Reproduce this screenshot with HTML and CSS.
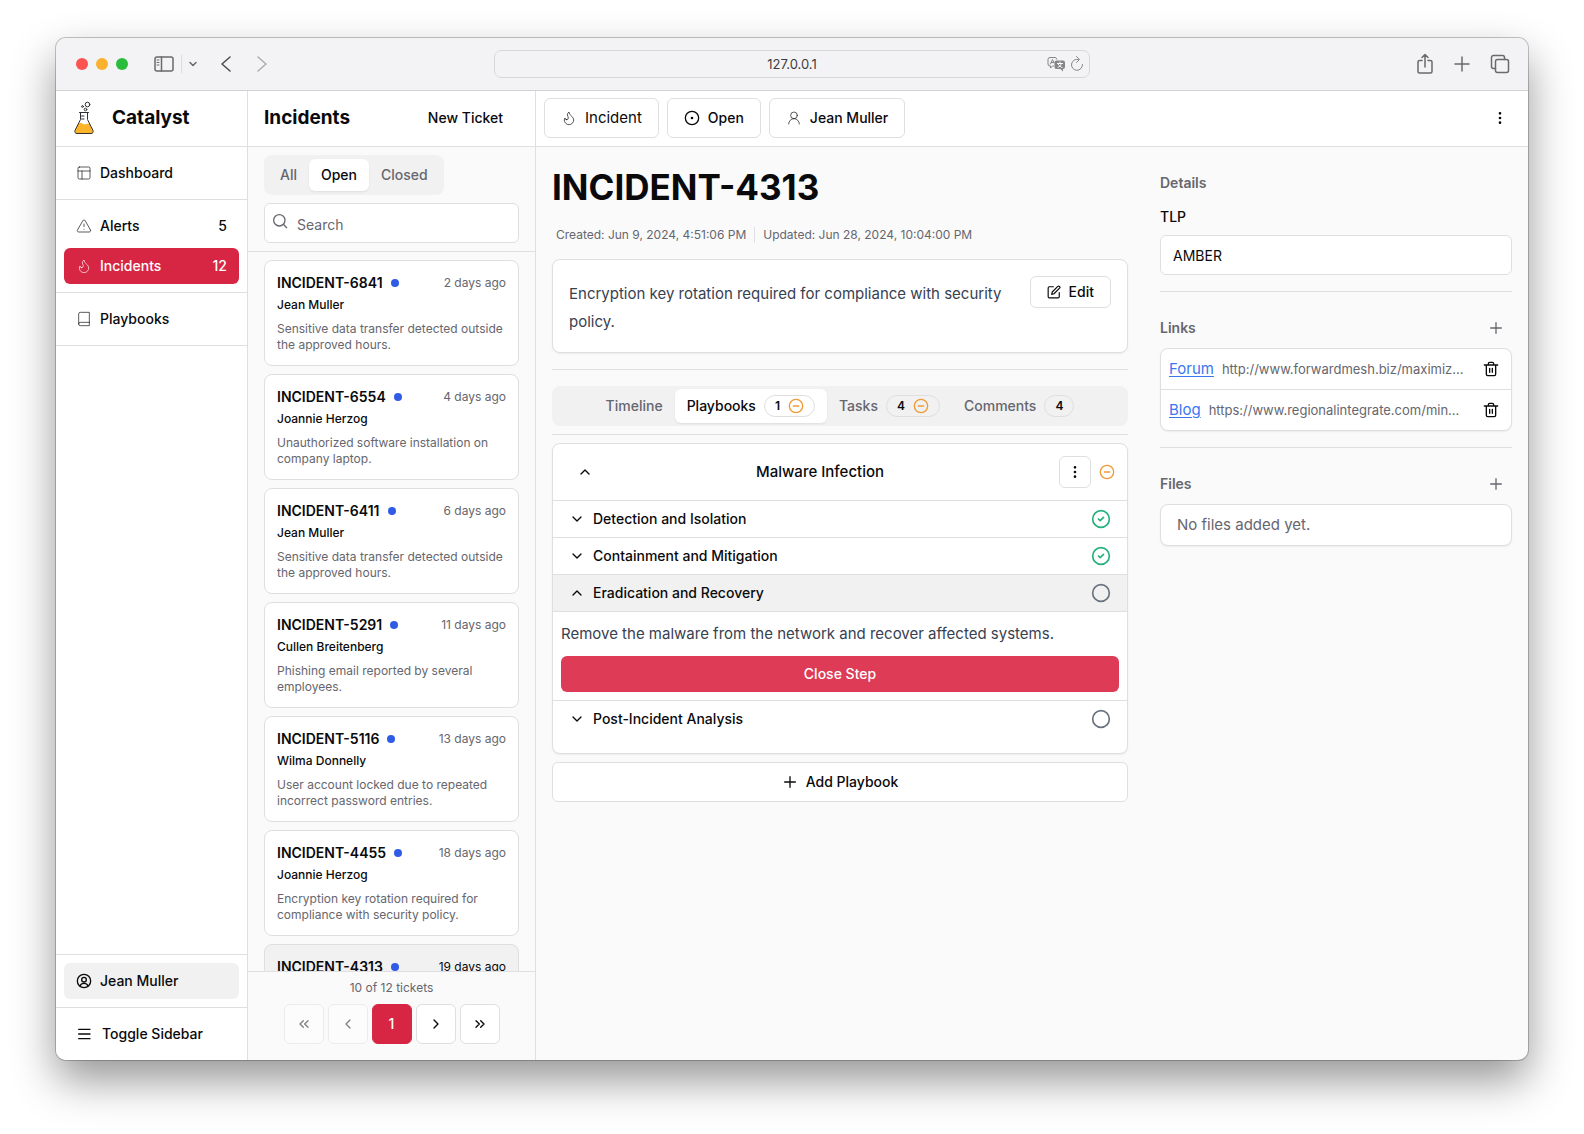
FILE: index.html
```html
<!DOCTYPE html>
<html lang="en">
<head>
<meta charset="utf-8">
<title>Catalyst – Incidents</title>
<link rel="stylesheet" href="styles.css">
</head>
<body>
<svg class="sprite" aria-hidden="true">
  <symbol id="flame" viewBox="0 0 24 24"><path d="M8.5 14.5A2.5 2.5 0 0 0 11 12c0-1.38-.5-2-1-3-1.072-2.143-.224-4.054 2-6 .5 2.5 2 4.9 4 6.5 2 1.6 3 3.5 3 5.5a7 7 0 1 1-14 0c0-1.153.433-2.294 1-3a2.5 2.5 0 0 0 2.5 2.5z"/></symbol>
  <symbol id="panels" viewBox="0 0 24 24"><rect x="3" y="3" width="18" height="18" rx="2"/><path d="M3 9h18M9 21V9"/></symbol>
  <symbol id="alert" viewBox="0 0 24 24"><path d="m21.73 18-8-14a2 2 0 0 0-3.48 0l-8 14A2 2 0 0 0 4 21h16a2 2 0 0 0 1.73-3M12 9v4M12 17h.01"/></symbol>
  <symbol id="book" viewBox="0 0 24 24"><path d="M4 19.5v-15A2.5 2.5 0 0 1 6.5 2H20v20H6.5a2.5 2.5 0 0 1 0-5H20"/></symbol>
  <symbol id="user" viewBox="0 0 24 24"><circle cx="12" cy="8" r="5"/><path d="M20 21a8 8 0 0 0-16 0"/></symbol>
  <symbol id="user-circle" viewBox="0 0 24 24"><circle cx="12" cy="12" r="10"/><circle cx="12" cy="10" r="3.5"/><path d="M6 19.5c1-3 3-4 6-4s5 1 6 4"/></symbol>
  <symbol id="menu" viewBox="0 0 24 24"><path d="M4 5h17M4 12h17M4 19h17"/></symbol>
  <symbol id="search" viewBox="0 0 24 24"><circle cx="11" cy="11" r="8.5"/><path d="m22 22-5-5"/></symbol>
  <symbol id="dot-circle" viewBox="0 0 24 24"><circle cx="12" cy="12" r="10"/><circle cx="12" cy="12" r="1"/></symbol>
  <symbol id="kebab" viewBox="0 0 24 24"><circle cx="12" cy="5" r="1"/><circle cx="12" cy="12" r="1"/><circle cx="12" cy="19" r="1"/></symbol>
  <symbol id="edit" viewBox="0 0 24 24"><path d="M11 3H4a2 2 0 0 0-2 2v15a2 2 0 0 0 2 2h15a2 2 0 0 0 2-2v-7"/><path d="M18.500 2.500a2.100 2.100 0 0 1 3 3L12 15l-4 1 1-4z"/></symbol>
  <symbol id="minus-circle" viewBox="0 0 24 24"><circle cx="12" cy="12" r="10"/><path d="M8 12h8"/></symbol>
  <symbol id="check-circle" viewBox="0 0 24 24"><circle cx="12" cy="12" r="10"/><path d="m9 12 2 2 4-4"/></symbol>
  <symbol id="circle" viewBox="0 0 24 24"><circle cx="12" cy="12" r="10"/></symbol>
  <symbol id="up" viewBox="0 0 24 24"><path d="m18 15-6-6-6 6"/></symbol>
  <symbol id="down" viewBox="0 0 24 24"><path d="m6 9 6 6 6-6"/></symbol>
  <symbol id="left" viewBox="0 0 24 24"><path d="m15 18-6-6 6-6"/></symbol>
  <symbol id="right" viewBox="0 0 24 24"><path d="m9 18 6-6-6-6"/></symbol>
  <symbol id="first" viewBox="0 0 24 24"><path d="m11 17-5-5 5-5M18 17l-5-5 5-5"/></symbol>
  <symbol id="last" viewBox="0 0 24 24"><path d="m6 17 5-5-5-5M13 17l5-5-5-5"/></symbol>
  <symbol id="plus" viewBox="0 0 24 24"><path d="M4 12h16M12 4v16"/></symbol>
  <symbol id="trash" viewBox="0 0 24 24"><path d="M2 6h20M19 6v14a2 2 0 0 1-2 2H7a2 2 0 0 1-2-2V6M8 6V4a2 2 0 0 1 2-2h4a2 2 0 0 1 2 2v2M10 11v6M14 11v6"/></symbol>
</svg>

<div class="window">
  <header class="titlebar">
    <div class="titlebar-left">
      <span class="light light-red"></span><span class="light light-amber"></span><span class="light light-green"></span>
      <button class="chrome-btn sidebar-toggle" aria-label="Show sidebar"><svg width="20" height="16" viewBox="0 0 20 16"><rect x="1" y="1" width="18" height="14" rx="2"/><path d="M7.5 1v14"/><path class="thin" d="M3 4h2M3 6.5h2M3 9h2"/></svg></button>
      <span class="chrome-sep"></span>
      <button class="chrome-btn chrome-caret" aria-label="Tab groups"><svg width="8" height="6" viewBox="0 0 8 6"><path d="m1 1.500 3 3 3-3"/></svg></button>
      <button class="chrome-btn chrome-back" aria-label="Back"><svg width="10" height="16" viewBox="0 0 10 16"><path d="M9 1 1 8l8 7"/></svg></button>
      <button class="chrome-btn chrome-forward" aria-label="Forward" disabled><svg width="10" height="16" viewBox="0 0 10 16"><path d="m1 1 8 7-8 7"/></svg></button>
    </div>
    <div class="address">
      <span></span>
      <span>127.0.0.1</span>
      <span class="address-icons">
        <svg width="18" height="16" viewBox="0 0 18 16"><path d="M6.500 10H5.500L3.500 12v-2H3a2 2 0 0 1-2-2V3.500a2 2 0 0 1 2-2h5a2 2 0 0 1 1.800 1.500M3.500 8 5.500 3.500 7 7M4.300 6.500h2.500"/><path class="solid" d="M9.500 4.500H16a2 2 0 0 1 2 2V11a2 2 0 0 1-2 2v2.500L13.500 13h-4a2 2 0 0 1-2-2V6.500a2 2 0 0 1 2-2z"/><path class="glyph" d="M10.500 7.500h5M13 6v1.500M11 11.500c2-1 3-2.500 3.300-4M11.500 8.500c1 1.500 2 2.500 3.600 3"/></svg>
        <svg width="14" height="16" viewBox="0 0 14 16"><path d="M8.500 3.500A5.500 5.500 0 1 0 12.500 8.500M6.500 .500l3 3-3 3"/></svg>
      </span>
    </div>
    <div class="titlebar-right">
      <button class="chrome-btn" aria-label="Share"><svg width="18" height="22" viewBox="0 0 18 22"><path d="M6 7.5H3.5A1.500 1.500 0 0 0 2 9v9.500A1.500 1.500 0 0 0 3.500 20h11a1.500 1.500 0 0 0 1.500-1.500V9a1.500 1.500 0 0 0-1.500-1.500H12M9 14V1.500M6 4.500l3-3 3 3"/></svg></button>
      <button class="chrome-btn" aria-label="New tab"><svg width="16" height="16" viewBox="0 0 16 16"><path d="M1 8h14M8 1v14"/></svg></button>
      <button class="chrome-btn" aria-label="Tab overview"><svg width="20" height="20" viewBox="0 0 20 20"><rect x="5.500" y="5.500" width="13" height="13" rx="2"/><path d="M5.500 14.500H3.500a2 2 0 0 1-2-2v-9a2 2 0 0 1 2-2h9a2 2 0 0 1 2 2v2"/></svg></button>
    </div>
  </header>

  <div class="app">
    <nav class="sidebar">
      <div class="brand">
        <svg class="flask" viewBox="0 0 22 34"><path class="liquid" d="M5 23c2-1.800 4-.8 6 .3 2 .6 3-1.300 5.500-.8L20 29.500c.6 1.500-.4 3-2 3H4c-1.600 0-2.600-1.500-2-3z"/><path d="M6.500 11.500h9M7.500 12v6.500L2 29.500c-.7 1.600.3 3 2 3h14c1.700 0 2.700-1.400 2-3L14.500 18.500V12M8.500 15h2.500M8.500 18h2.500"/><circle cx="14.500" cy="3.500" r="2.300"/><circle cx="9.500" cy="5.500" r=".9"/><circle cx="12.500" cy="8.500" r="1.300"/></svg>
        <span class="brand-name">Catalyst</span>
      </div>
      <div class="nav-group"><a class="nav-item" href="#dashboard"><svg><use href="#panels"/></svg>Dashboard</a></div>
      <div class="nav-group">
        <a class="nav-item" href="#alerts"><svg><use href="#alert"/></svg>Alerts<span class="count">5</span></a>
        <a class="nav-item nav-item-active" href="#incidents"><svg><use href="#flame"/></svg>Incidents<span class="count">12</span></a>
      </div>
      <div class="nav-group"><a class="nav-item" href="#playbooks"><svg><use href="#book"/></svg>Playbooks</a></div>
      <div class="nav-group nav-bottom"><a class="nav-item nav-item-user" href="#me"><svg><use href="#user-circle"/></svg>Jean Muller</a></div>
      <div class="nav-toggle"><button class="nav-item"><svg><use href="#menu"/></svg>Toggle Sidebar</button></div>
    </nav>

    <section class="tickets">
      <div class="tickets-head"><h2>Incidents</h2><button class="ghost">New Ticket</button></div>
      <div class="filters">
        <div class="segments"><button>All</button><button class="selected">Open</button><button>Closed</button></div>
        <label class="search"><svg><use href="#search"/></svg><input type="text" placeholder="Search" aria-label="Search"></label>
      </div>
      <div class="ticket-list">
        <a class="ticket" href="#6841"><span class="ticket-top"><b>INCIDENT-6841</b><i class="dot"></i><time>2 days ago</time></span><span class="owner">Jean Muller</span><span class="summary">Sensitive data transfer detected outside the approved hours.</span></a>
        <a class="ticket" href="#6554"><span class="ticket-top"><b>INCIDENT-6554</b><i class="dot"></i><time>4 days ago</time></span><span class="owner">Joannie Herzog</span><span class="summary">Unauthorized software installation on company laptop.</span></a>
        <a class="ticket" href="#6411"><span class="ticket-top"><b>INCIDENT-6411</b><i class="dot"></i><time>6 days ago</time></span><span class="owner">Jean Muller</span><span class="summary">Sensitive data transfer detected outside the approved hours.</span></a>
        <a class="ticket" href="#5291"><span class="ticket-top"><b>INCIDENT-5291</b><i class="dot"></i><time>11 days ago</time></span><span class="owner">Cullen Breitenberg</span><span class="summary">Phishing email reported by several employees.</span></a>
        <a class="ticket" href="#5116"><span class="ticket-top"><b>INCIDENT-5116</b><i class="dot"></i><time>13 days ago</time></span><span class="owner">Wilma Donnelly</span><span class="summary">User account locked due to repeated incorrect password entries.</span></a>
        <a class="ticket" href="#4455"><span class="ticket-top"><b>INCIDENT-4455</b><i class="dot"></i><time>18 days ago</time></span><span class="owner">Joannie Herzog</span><span class="summary">Encryption key rotation required for compliance with security policy.</span></a>
        <a class="ticket ticket-current" href="#4313"><span class="ticket-top"><b>INCIDENT-4313</b><i class="dot"></i><time>19 days ago</time></span></a>
      </div>
      <div class="pager">
        <p>10 of 12 tickets</p>
        <div class="pages">
          <button aria-label="First page" disabled><svg><use href="#first"/></svg></button>
          <button aria-label="Previous page" disabled><svg><use href="#left"/></svg></button>
          <button class="page-current">1</button>
          <button aria-label="Next page"><svg><use href="#right"/></svg></button>
          <button aria-label="Last page"><svg><use href="#last"/></svg></button>
        </div>
      </div>
    </section>

    <main class="detail">
      <div class="toolbar">
        <button class="outline type-btn"><svg><use href="#flame"/></svg>Incident</button>
        <button class="outline"><svg class="strong"><use href="#dot-circle"/></svg>Open</button>
        <button class="outline"><svg><use href="#user"/></svg>Jean Muller</button>
        <button class="more" aria-label="More"><svg class="strong"><use href="#kebab"/></svg></button>
      </div>
      <div class="columns">
        <article class="content">
          <h1>INCIDENT-4313</h1>
          <div class="dates"><span>Created: Jun 9, 2024, 4:51:06 PM</span><span>Updated: Jun 28, 2024, 10:04:00 PM</span></div>
          <div class="card description"><p>Encryption key rotation required for compliance with security policy.</p><button class="outline edit"><svg class="strong"><use href="#edit"/></svg>Edit</button></div>
          <hr>
          <div class="tabs">
            <button>Timeline</button>
            <button class="selected">Playbooks<span class="badge">1<svg class="orange"><use href="#minus-circle"/></svg></span></button>
            <button>Tasks<span class="badge">4<svg class="orange"><use href="#minus-circle"/></svg></span></button>
            <button>Comments<span class="badge">4</span></button>
          </div>
          <hr class="tight">
          <section class="card playbook">
            <div class="playbook-head"><button class="fold" aria-label="Collapse"><svg class="strong"><use href="#up"/></svg></button><h3>Malware Infection</h3><button class="outline square" aria-label="Playbook actions"><svg class="strong"><use href="#kebab"/></svg></button><svg class="orange"><use href="#minus-circle"/></svg></div>
            <button class="step"><svg class="strong"><use href="#down"/></svg>Detection and Isolation<svg class="state done"><use href="#check-circle"/></svg></button>
            <button class="step"><svg class="strong"><use href="#down"/></svg>Containment and Mitigation<svg class="state done"><use href="#check-circle"/></svg></button>
            <button class="step step-open"><svg class="strong"><use href="#up"/></svg>Eradication and Recovery<svg class="state"><use href="#circle"/></svg></button>
            <div class="step-body"><p>Remove the malware from the network and recover affected systems.</p><button class="primary">Close Step</button></div>
            <button class="step"><svg class="strong"><use href="#down"/></svg>Post-Incident Analysis<svg class="state"><use href="#circle"/></svg></button>
          </section>
          <button class="outline add"><svg class="strong"><use href="#plus"/></svg>Add Playbook</button>
        </article>

        <aside class="meta">
          <section>
            <div class="meta-head"><h4>Details</h4></div>
            <label for="tlp">TLP</label>
            <input class="field" id="tlp" type="text" value="AMBER">
          </section>
          <section>
            <div class="meta-head"><h4>Links</h4><button aria-label="Add link"><svg class="strong"><use href="#plus"/></svg></button></div>
            <div class="card links">
              <div class="link-row"><a href="#forum">Forum</a><span>http://www.forwardmesh.biz/maximiz...</span><button aria-label="Delete Forum"><svg class="strong"><use href="#trash"/></svg></button></div>
              <div class="link-row"><a href="#blog">Blog</a><span>https://www.regionalintegrate.com/min...</span><button aria-label="Delete Blog"><svg class="strong"><use href="#trash"/></svg></button></div>
            </div>
          </section>
          <section>
            <div class="meta-head"><h4>Files</h4><button aria-label="Add file"><svg class="strong"><use href="#plus"/></svg></button></div>
            <p class="card empty">No files added yet.</p>
          </section>
        </aside>
      </div>
    </main>
  </div>
</div>
</body>
</html>
```
FILE: styles.css
```css
*, *::before, *::after { box-sizing: border-box; }
:root {
  --line: #dfdfe1;
  --muted: #66666e;
  --ink: #0a0a0c;
  --red: #d72643;
  --soft: #f1f1f2;
  --panel: #fafafa;
}
body {
  margin: 0;
  height: 100vh;
  padding: 38px 56px 74px;
  background: #fff;
  color: var(--ink);
  font: 500 14px/20px Inter, "Liberation Sans", sans-serif;
}
h1, h2, h3, h4, p { margin: 0; }
a { color: inherit; text-decoration: none; }
button, input { font: inherit; color: inherit; }
button { border: 0; padding: 0; background: none; }
svg { flex: none; fill: none; stroke: currentColor; stroke-width: 1; stroke-linecap: round; stroke-linejoin: round; width: 16px; height: 16px; }
svg.strong { stroke-width: 2; }
.sprite { position: absolute; width: 0; height: 0; }

.window {
  display: flex;
  flex-direction: column;
  height: 100%;
  border-radius: 10px;
  overflow: hidden;
  background: var(--panel);
  box-shadow: 0 0 0 1px rgba(0, 0, 0, .22), 0 20px 44px rgba(0, 0, 0, .42);
}

/* Browser chrome */
.titlebar {
  flex: none;
  display: grid;
  grid-template-columns: 1fr 596px 1fr;
  align-items: center;
  height: 53px;
  background: #f3f3f5;
  border-bottom: 1px solid #d2d2d4;
}
.titlebar-left, .titlebar-right { display: flex; align-items: center; }
.titlebar-left { padding-left: 20px; }
.titlebar-right { justify-content: flex-end; gap: 20px; padding-right: 18px; }
.light { width: 12px; height: 12px; margin-right: 8px; border-radius: 50%; }
.light-red { background: #fb5450; }
.light-amber { background: #fab12f; }
.light-green { background: #2bbc3e; }
.chrome-btn { display: flex; color: #6a6a6c; }
.chrome-btn svg { width: auto; height: auto; stroke-width: 1.5; }
.chrome-btn .thin { stroke-width: 1; }
.sidebar-toggle { margin-left: 18px; }
.chrome-sep { width: 1px; height: 18px; margin: 0 7px; background: #dcdcde; }
.chrome-back { margin-left: 24px; color: #4c4c4e; }
.chrome-forward { margin-left: 26px; color: #adadaf; }
.address {
  display: grid;
  grid-template-columns: 1fr auto 1fr;
  align-items: center;
  height: 28px;
  padding: 0 5px;
  border: 1px solid #d7d7d9;
  border-radius: 7px;
  color: #3c3c3e;
  font-size: 13px;
  font-weight: 400;
}
.address-icons { display: flex; justify-content: flex-end; gap: 5px; color: #858587; }
.address-icons svg { width: auto; }
.address-icons .solid { fill: currentColor; stroke: none; }
.address-icons .glyph { stroke: #fff; }

.app { flex: 1; min-height: 0; display: flex; }

/* Navigation */
.sidebar { display: flex; flex-direction: column; width: 192px; background: #fff; border-right: 1px solid var(--line); }
.brand { display: flex; align-items: center; height: 56px; padding: 0 0 2px 17px; gap: 17px; border-bottom: 1px solid var(--line); }
.flask { width: 22px; height: 34px; stroke: #303034; }
.flask .liquid { fill: #fcb52b; stroke: none; }
.brand-name, h2 { font-size: 19px; line-height: 28px; font-weight: 700; }
.nav-group { display: flex; flex-direction: column; gap: 4px; padding: 8px; border-bottom: 1px solid var(--line); }
.nav-bottom { margin-top: auto; border-top: 1px solid var(--line); }
.nav-toggle { padding: 8px; }
.nav-item { display: flex; align-items: center; gap: 8px; width: 100%; height: 36px; padding: 0 12px; border-radius: 6px; }
.nav-item-active { background: var(--red); color: #fff; }
.nav-item-user { background: var(--soft); }
.nav-item-user svg, .nav-toggle svg { stroke-width: 2; }
.nav-toggle .nav-item { gap: 10px; }
.count { margin-left: auto; }

/* Ticket list */
.tickets { display: flex; flex-direction: column; width: 288px; border-right: 1px solid var(--line); }
.tickets-head { flex: none; display: flex; align-items: center; justify-content: space-between; height: 56px; padding: 0 16px 2px; background: #fff; border-bottom: 1px solid var(--line); }
.ghost { height: 40px; padding: 0 16px; }
.filters { display: flex; flex-direction: column; align-items: flex-start; gap: 8px; padding: 8px 16px; border-bottom: 1px solid var(--line); }
.segments { display: flex; padding: 4px; border-radius: 8px; background: var(--soft); color: var(--muted); }
.segments button { height: 32px; padding: 0 12px; border-radius: 6px; }
.selected { background: #fff; color: var(--ink); box-shadow: 0 1px 2px rgba(0, 0, 0, .08); }
.search { display: flex; align-items: flex-start; gap: 9px; width: 100%; height: 40px; padding: 9px 7px; border: 1px solid var(--line); border-radius: 6px; background: #fff; color: var(--muted); font-weight: 400; }
.search svg { stroke-width: 2; }
.search input { flex: 1; min-width: 0; height: 22px; border: 0; padding: 0; background: none; outline: 0; }
.search input::placeholder { color: var(--muted); opacity: 1; }
.ticket-list { flex: 1; min-height: 0; overflow: hidden; display: flex; flex-direction: column; gap: 8px; padding: 8px 16px; }
.ticket { flex: none; display: flex; flex-direction: column; min-height: 106px; padding: 12px; border: 1px solid var(--line); border-radius: 8px; background: #fff; font-size: 12px; line-height: 16px; }
.ticket-top { display: flex; align-items: center; gap: 8px; height: 20px; }
.ticket-top b { font-size: 14px; font-weight: 600; }
.dot { width: 8px; height: 8px; border-radius: 50%; background: #2f5be5; }
.ticket time { margin-left: auto; color: var(--muted); font-weight: 400; }
.owner { margin-top: 4px; }
.summary { margin-top: 8px; color: var(--muted); font-weight: 400; }
.ticket-current { background: var(--soft); }
.ticket-current time { color: var(--ink); }
.pager { flex: none; padding: 8px 16px 16px; border-top: 1px solid var(--line); text-align: center; }
.pager p { color: var(--muted); font-size: 12px; line-height: 16px; font-weight: 400; }
.pages { display: flex; justify-content: center; gap: 4px; margin-top: 8px; }
.pages button { display: flex; align-items: center; justify-content: center; width: 40px; height: 40px; border: 1px solid var(--line); border-radius: 6px; background: #fff; }
.pages svg { stroke-width: 2; }
.pages button:disabled { opacity: .5; }
.pages .page-current { background: var(--red); border-color: var(--red); color: #fff; }

/* Ticket detail */
.detail { flex: 1; min-width: 0; }
.toolbar { display: flex; align-items: center; gap: 8px; height: 56px; padding: 0 8px 2px; background: #fff; border-bottom: 1px solid var(--line); }
.outline { display: flex; align-items: center; justify-content: center; gap: 8px; height: 40px; padding: 0 16px; border: 1px solid var(--line); border-radius: 6px; background: #fff; }
.type-btn { font-size: 15px; font-weight: 400; }
.more { display: flex; align-items: center; justify-content: center; width: 40px; height: 40px; margin-left: auto; }
.columns { display: flex; }
.content { flex: 1; min-width: 0; padding: 16px; }
h1 { font-size: 35px; line-height: 48px; font-weight: 700; }
.dates { display: flex; height: 16px; margin: 16px 0; color: var(--muted); font-size: 12px; line-height: 16px; font-weight: 400; }
.dates span { padding: 0 8px 0 4px; }
.dates span + span { padding-left: 8px; border-left: 1px solid var(--line); }
.card { border: 1px solid var(--line); border-radius: 8px; background: #fff; box-shadow: 0 1px 2px rgba(0, 0, 0, .06); }
.description { display: flex; align-items: flex-start; gap: 16px; padding: 16px; }
.description p { flex: 1; padding-top: 4px; }
.description p, .step-body p { color: #374151; font-size: 15px; line-height: 28px; font-weight: 400; }
.edit, .square { height: 32px; }
.edit svg { width: 14px; height: 14px; }
.square { width: 32px; padding: 0; }
hr { height: 1px; margin: 16px 0; border: 0; background: var(--line); }
hr.tight { margin: 8px 0; }
.tabs { display: flex; justify-content: center; align-items: center; height: 40px; border-radius: 8px; background: var(--soft); color: var(--muted); }
.tabs button { display: flex; align-items: center; gap: 8px; height: 34px; padding: 0 12px; border-radius: 6px; }
.badge { display: flex; align-items: center; gap: 8px; height: 22px; padding: 0 10px; border: 1px solid var(--line); border-radius: 11px; color: var(--ink); font-size: 12px; font-weight: 600; }
svg.orange { color: #f09a37; stroke-width: 2; }
.playbook { padding-bottom: 16px; overflow: hidden; }
.playbook-head { display: flex; align-items: center; gap: 8px; height: 56px; padding: 0 12px; }
.fold { display: flex; justify-content: center; width: 40px; }
.playbook-head h3 { flex: 1; padding-right: 24px; text-align: center; font-size: 15px; line-height: 24px; font-weight: 500; }
.step { display: flex; align-items: center; gap: 8px; width: 100%; height: 37px; padding: 0 16px; border-top: 1px solid var(--line); }
.step-open { background: var(--soft); }
.state { width: 20px; height: 20px; margin-left: auto; stroke-width: 2; color: #6b7280; }
.done { color: #25b07c; }
.step-body { padding: 8px; border-top: 1px solid var(--line); }
.primary { width: 100%; height: 36px; margin-top: 8px; border-radius: 6px; background: #dd3b56; color: #fff; }
.add { width: 100%; margin-top: 8px; }

/* Side panel */
.meta { width: 384px; padding: 16px; }
.meta section + section { margin-top: 16px; padding-top: 16px; border-top: 1px solid var(--line); }
.meta-head { display: flex; align-items: center; justify-content: space-between; height: 40px; color: var(--muted); }
.meta-head h4 { font-size: 14px; font-weight: 600; }
.meta-head button { display: flex; padding: 8px; }
.meta label { display: block; margin-top: 4px; }
.field { width: 100%; height: 40px; margin-top: 8px; padding: 0 12px; border: 1px solid var(--line); border-radius: 6px; background: #fff; font-weight: 400; }
.link-row { display: flex; align-items: center; gap: 8px; height: 40px; padding: 0 8px; }
.link-row + .link-row { height: 41px; border-top: 1px solid var(--line); }
.link-row a { color: #3b76f0; font-size: 15px; font-weight: 400; text-decoration: underline; text-underline-offset: 2px; }
.link-row span { flex: 1; min-width: 0; overflow: hidden; text-overflow: ellipsis; white-space: nowrap; color: var(--muted); font-size: 13px; font-weight: 400; }
.link-row button { display: flex; padding: 4px; }
.empty { padding: 8px 16px; color: var(--muted); font-size: 15px; line-height: 24px; font-weight: 400; }
```
